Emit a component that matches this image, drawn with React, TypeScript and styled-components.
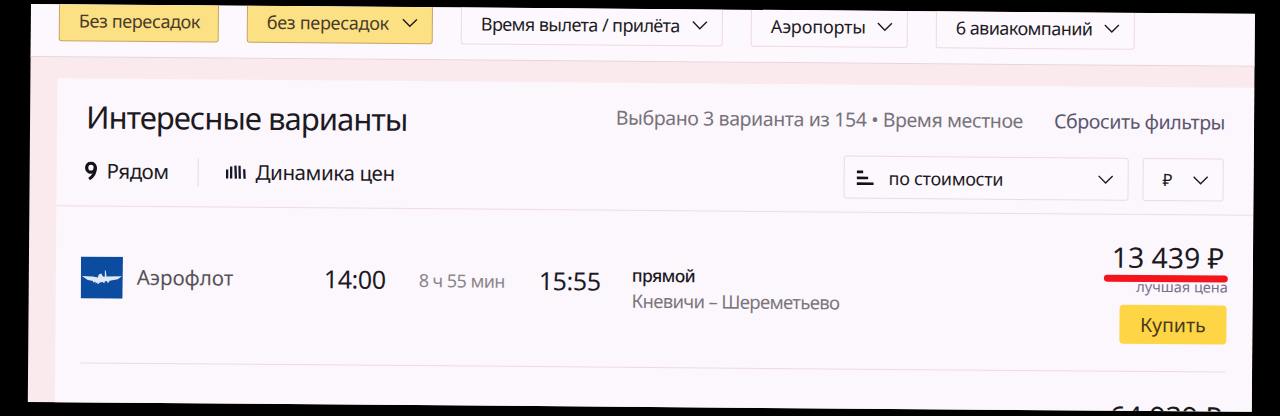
import React from 'react';
import styled, { createGlobalStyle } from 'styled-components';

const Global = createGlobalStyle`
  html, body { margin: 0; height: 416px; background: #000; overflow: hidden; }
  * { box-sizing: border-box; }
  body { font-family: "Noto Sans", "Open Sans", sans-serif; }
`;

const Stage = styled.main`
  width: 1280px;
  height: 416px;
  padding: 4px 0 0 31px;
  background: #000;
  overflow: hidden;
`;

const Screen = styled.div`
  width: 1224px;
  height: 398px;
  overflow: hidden;
  display: flex;
  flex-direction: column;
  background: #fbeaed;
  transform: rotate(0.46deg);
  transform-origin: 0 0;
`;

const Text = styled.span<{ $size: number; $track?: number; $color?: string; $weight?: number }>`
  display: block;
  white-space: pre;
  font-size: ${(p) => p.$size}px;
  line-height: 1.36;
  letter-spacing: ${(p) => p.$track ?? 0}px;
  font-weight: ${(p) => p.$weight ?? 400};
  color: ${(p) => p.$color ?? '#1d1a1f'};
`;

const FilterBar = styled.div`
  flex: none;
  height: 53px;
  padding: 0 0 15px 28px;
  display: flex;
  align-items: flex-end;
  gap: 28px;
  overflow: hidden;
  background: #fcf8fe;
  border-bottom: 1px solid #e8d3d8;
`;

const Control = styled.button<{ $width: number; $active?: boolean; $inset?: number }>`
  flex: none;
  width: ${(p) => p.$width}px;
  height: 43px;
  padding: 1px 14px 0 ${(p) => p.$inset ?? 19}px;
  display: flex;
  align-items: center;
  justify-content: space-between;
  font-family: inherit;
  border-radius: 3px;
  border: 1px solid ${(p) => (p.$active ? '#c9a266' : '#f0d9df')};
  background: ${(p) => (p.$active ? '#fbe184' : '#fcf8fd')};
`;

const Card = styled.section`
  flex: none;
  height: 325px;
  margin: 21px 0 0 27px;
  overflow: hidden;
  background: #fbf7fd;
`;

const CardHead = styled.header`
  height: 128px;
  border-bottom: 1px solid #f0dbe1;
`;

const TitleRow = styled.div`
  height: 71px;
  padding: 17px 29px 0 29px;
  display: flex;
  align-items: flex-start;
  justify-content: space-between;
`;

const Summary = styled.div`
  display: flex;
  gap: 31px;
  padding-top: 5px;
`;

const ToolRow = styled.div`
  height: 43px;
  padding: 0 30px 0 28px;
  display: flex;
  align-items: center;
`;

const Tool = styled.div`
  display: flex;
  align-items: center;
  gap: 9px;
`;

const Separator = styled.i`
  width: 1px;
  height: 28px;
  margin: 0 27px 0 29px;
  background: #ead9df;
`;

const Selects = styled.div`
  display: flex;
  gap: 14px;
  margin-left: auto;
`;

const SelectLabel = styled.div<{ $gap: number }>`
  display: flex;
  align-items: center;
  gap: ${(p) => p.$gap}px;
`;

const Flight = styled.article`
  height: 157px;
  margin: 0 27px 0 25px;
  display: flex;
  align-items: flex-start;
  border-bottom: 1px solid #f0d9df;
`;

const Airline = styled.div`
  width: 243px;
  padding-top: 50px;
  display: flex;
  align-items: center;
  gap: 14px;
`;

const Cell = styled.div<{ $width: number; $top: number }>`
  width: ${(p) => p.$width}px;
  padding-top: ${(p) => p.$top}px;
`;

const Offer = styled.div`
  margin-left: auto;
  padding: 23px 2px 0 0;
  display: flex;
  flex-direction: column;
  align-items: flex-end;
`;

const PriceMark = styled.i`
  position: relative;
  z-index: 1;
  width: 124px;
  height: 7px;
  margin: -1px -4px 0 0;
  border-radius: 4px;
  background: #f5141c;
`;

const Note = styled.div`
  height: 28px;
  margin: -5px -4px 0 0;
`;

const Buy = styled.button`
  width: 107px;
  height: 39px;
  margin-right: -3px;
  padding: 0;
  display: flex;
  align-items: center;
  justify-content: center;
  border: 0;
  border-radius: 4px;
  background: #fdd545;
  font-family: inherit;
`;

const NextFlight = styled.div`
  display: flex;
  justify-content: flex-end;
  padding: 25px 30px 0 0;
`;

const Chevron = () => (
  <svg width="16" height="10" viewBox="0 0 16 10" fill="none" stroke="#1d1a1f" strokeWidth="1.4">
    <path d="M1 1.3 8 8.3 15 1.3" />
  </svg>
);

const Pin = () => (
  <svg width="13" height="20" viewBox="0 0 13 20" fill="none" stroke="#141216">
    <ellipse cx="6.3" cy="6.2" rx="4.3" ry="4.5" strokeWidth="3.3" />
    <path d="M10.7 6C10.9 11 8.5 15 4.5 17.5" strokeWidth="3" />
  </svg>
);

const Bars = () => (
  <svg width="21" height="15" viewBox="0 0 21 15" fill="none" stroke="#17152a" strokeWidth="2.3">
    <path d="M1.5 5v9M5.5 2v12M9.7 1l.6 13M13.8 1l.4 13M18.5 4.500l.5 9.500" />
  </svg>
);

const SortIcon = () => (
  <svg width="18" height="16" viewBox="0 0 18 16" fill="none" stroke="#141216" strokeWidth="2.6">
    <path d="M0 2.200h6.500M0 8.200h11.500M0 14h17" />
  </svg>
);

const AirlineLogo = () => (
  <svg width="42" height="42" viewBox="0 0 42 42">
    <rect width="42" height="42" fill="#0b4ba0" />
    <path
      fill="#dfe9f6"
      d="M1 19.500 12 20l5 1 1-3 2.500-1 1.500 3 2 .2 0-6.200.9 0 .8 6L41 19.500 37 22.500l-8 1.500-2 2.500-1-2-2 .5-.5 2-1.500-1.500-3 .5-2 2-.5-2-2 1 .5-1.800-3 .8.5-1.500L7 23.500z"
    />
  </svg>
);

export default function App() {
  return (
    <Stage>
      <Global />
      <Screen>
        <FilterBar>
          <Control $width={160} $active>
            <Text $size={18} $track={-0.38} $color="#4a3a2a">Без пересадок</Text>
          </Control>
          <Control $width={186} $active>
            <Text $size={18} $track={-0.3} $color="#4a3a2a">без пересадок</Text>
            <Chevron />
          </Control>
          <Control $width={262}>
            <Text $size={18} $track={-0.58}>Время вылета / прилёта</Text>
            <Chevron />
          </Control>
          <Control $width={157}>
            <Text $size={18} $track={-0.15}>Аэропорты</Text>
            <Chevron />
          </Control>
          <Control $width={199}>
            <Text $size={18} $track={-0.55}>6 авиакомпаний</Text>
            <Chevron />
          </Control>
        </FilterBar>
        <Card>
          <CardHead>
            <TitleRow>
              <Text $size={31} $track={-0.96}>Интересные варианты</Text>
              <Summary>
                <Text $size={19.5} $track={-0.39} $color="#78727a">Выбрано 3 варианта из 154 • Время местное</Text>
                <Text $size={19.5} $track={-0.38} $color="#5c566e">Сбросить фильтры</Text>
              </Summary>
            </TitleRow>
            <ToolRow>
              <Tool>
                <Pin />
                <Text $size={20.5} $track={-0.5}>Рядом</Text>
              </Tool>
              <Separator />
              <Tool>
                <Bars />
                <Text $size={20.5} $track={-0.38}>Динамика цен</Text>
              </Tool>
              <Selects>
                <Control $width={285} $inset={12}>
                  <SelectLabel $gap={14}>
                    <SortIcon />
                    <Text $size={18} $track={-0.3}>по стоимости</Text>
                  </SelectLabel>
                  <Chevron />
                </Control>
                <Control $width={81}>
                  <Text $size={17}>₽</Text>
                  <Chevron />
                </Control>
              </Selects>
            </ToolRow>
          </CardHead>
          <Flight>
            <Airline>
              <AirlineLogo />
              <Text $size={20.5} $color="#575257">Аэрофлот</Text>
            </Airline>
            <Cell $width={95} $top={53}><Text $size={25} $track={-0.4}>14:00</Text></Cell>
            <Cell $width={120} $top={59}><Text $size={18} $track={-0.55} $color="#8b858b">8 ч 55 мин</Text></Cell>
            <Cell $width={93} $top={53}><Text $size={25} $track={-0.4}>15:55</Text></Cell>
            <Cell $width={220} $top={53}>
              <Text $size={17.5} $track={-0.65} $weight={500}>прямой</Text>
              <Text $size={18.5} $track={-0.66} $color="#7c767c">Кневичи – Шереметьево</Text>
            </Cell>
            <Offer>
              <Text $size={28.3}>13 439 ₽</Text>
              <PriceMark />
              <Note><Text $size={14.5} $color="#77708a">лучшая цена</Text></Note>
              <Buy><Text $size={19.5} $color="#4a3a1c">Купить</Text></Buy>
            </Offer>
          </Flight>
          <NextFlight>
            <Text $size={28.3}>64 939 ₽</Text>
          </NextFlight>
        </Card>
      </Screen>
    </Stage>
  );
}
